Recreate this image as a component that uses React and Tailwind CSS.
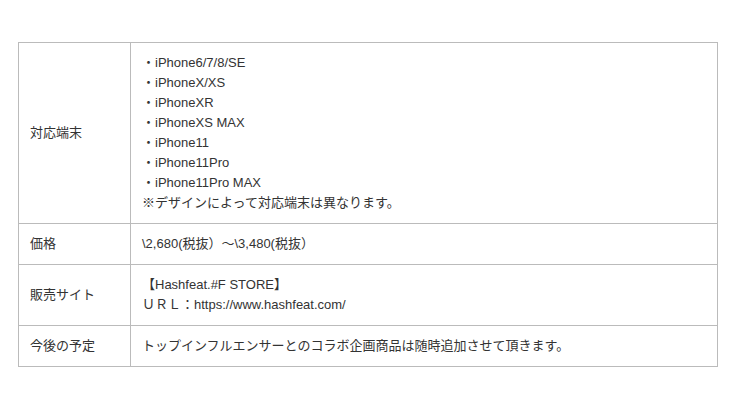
import React from "react";

const rows = [
  {
    label: "対応端末",
    lines: [
      "・iPhone6/7/8/SE",
      "・iPhoneX/XS",
      "・iPhoneXR",
      "・iPhoneXS MAX",
      "・iPhone11",
      "・iPhone11Pro",
      "・iPhone11Pro MAX",
      "※デザインによって対応端末は異なります。",
    ],
  },
  { label: "価格", lines: ["\\2,680(税抜）～\\3,480(税抜）"] },
  {
    label: "販売サイト",
    lines: ["【Hashfeat.#F STORE】", "ＵＲＬ：https://www.hashfeat.com/"],
  },
  {
    label: "今後の予定",
    lines: ["トップインフルエンサーとのコラボ企画商品は随時追加させて頂きます。"],
  },
];

const App = () => {
  return (
    <div className="w-[740px] h-[407px] bg-white pt-[42px] pl-[18px] font-['Liberation_Sans','Noto_Sans_CJK_JP',sans-serif] text-[13px] leading-[20px] text-[#333]">
      <table className="w-[700px] table-fixed border-collapse">
        <colgroup>
          <col className="w-[112px]" />
          <col />
        </colgroup>
        <tbody>
          {rows.map((row) => (
            <tr key={row.label}>
              <td className="border border-[#bbb] px-[11px] py-[10px] align-middle">
                {row.label}
              </td>
              <td className="border border-[#bbb] px-[11px] py-[10px] align-middle">
                {row.lines.map((line) => (
                  <div key={line}>{line}</div>
                ))}
              </td>
            </tr>
          ))}
        </tbody>
      </table>
    </div>
  );
};

export default App;
